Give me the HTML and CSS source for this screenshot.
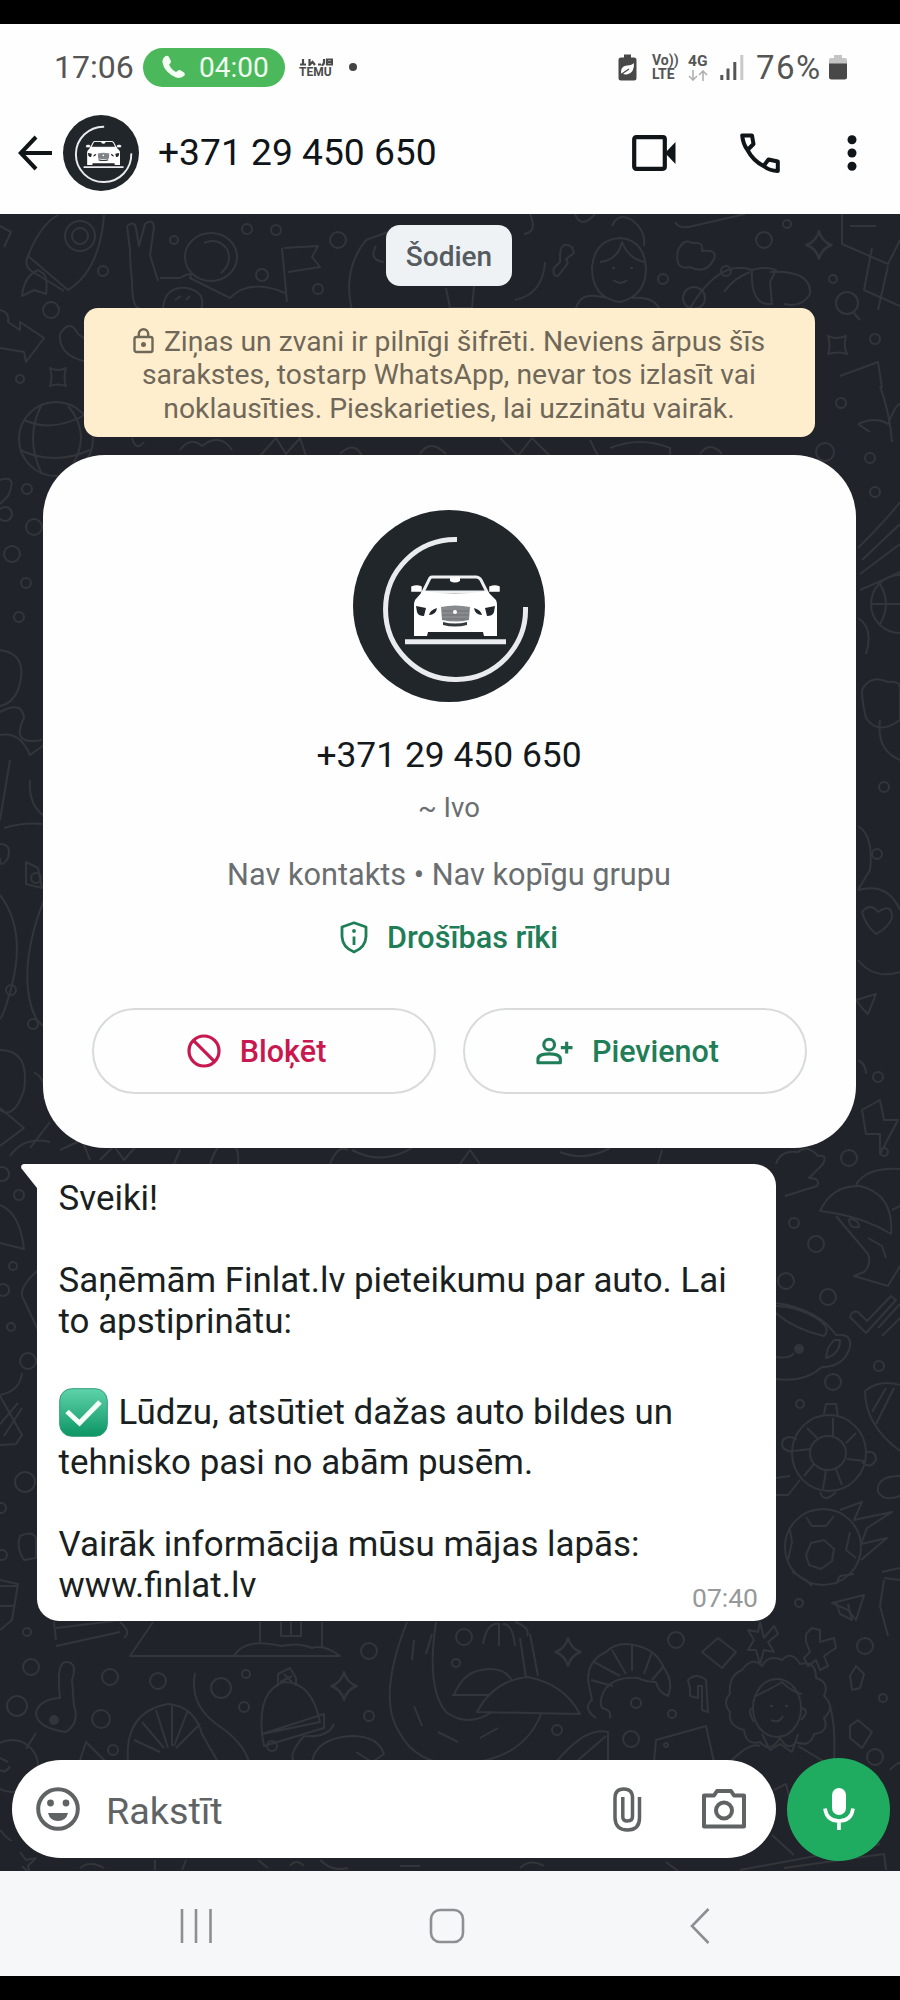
FILE: index.html
```html
<!DOCTYPE html>
<html lang="lv">
<head>
<meta charset="utf-8">
<title>+371 29 450 650</title>
<link rel="stylesheet" href="styles.css">
</head>
<body>
<svg class="defs" width="0" height="0" aria-hidden="true">
  <defs>
    <symbol id="avatar" viewBox="0 0 192 192">
      <circle cx="96" cy="96" r="96" fill="#20262a"/>
      <path d="M104 29.5A70 70 0 1 0 172.5 97" fill="none" stroke="#e9ebee" stroke-width="5"/>
      <path d="M79 67H123Q126 67 128 70L134 82H70L76 70Q77 67 79 67Z" fill="#20262a" stroke="#eef0f2" stroke-width="3"/>
      <path d="M97 67h10v4q-5 3-10 0Z" fill="#fff"/>
      <path d="M59 77q5-2 9 0v4h-9ZM137 77q5-2 9 0v4h-9Z" fill="#fff" stroke="#fff" stroke-width="1.5"/>
      <path d="M70 81Q102 86 134 81L143 90Q144 92 144 96V126H131L130 122H75L74 126H61V96Q61 92 62 90Z" fill="#fff"/>
      <path d="M63 96l10 2-2 8q-6 0-7-4ZM76 105q1-5 8-7-1 7-8 7ZM142 96l-10 2 2 8q6 0 7-4ZM129 105q-1-5-8-7 1 7 8 7Z" fill="#20262a"/>
      <path d="M88 97q14-3 29 0l-1 13q-13 3-27 0Z" fill="#888b8e"/>
      <path d="M89 101h27M89 105h27M89 109h26" stroke="#6d7175" stroke-width="1.2"/>
      <circle cx="102" cy="102" r="2" fill="#fff"/>
      <path d="M90 112q12 3 24 0v3q-12 3-24 0Z" fill="#34393c"/>
      <path d="M52 131.7H153" stroke="#e9ebee" stroke-width="5"/>
    </symbol>
    <symbol id="spark" viewBox="-12 -12 24 24"><path d="M0-11Q2-3 10 0 2 3 0 11-2 3-10 0-2-3 0-11Z"/></symbol>
  </defs>
</svg>

<header class="top">
  <div class="status">
    <span class="clock">17:06</span>
    <span class="call">
      <svg width="26" height="26" viewBox="0 0 26 26"><path d="M4 2.500Q1 5 1.500 8.500Q3 18 15 23.500Q20 25 23.500 21.500Q24.500 20 23 18.500L19 16Q17.500 15.500 16.500 17L15 18Q10 15.500 8.200 10.500L9.500 9Q10.500 8 9.500 6L7.500 2.300Q6 1 4 2.500Z" fill="#f4fff4"/></svg>
      <span class="dur">04:00</span>
    </span>
    <span class="temu">
      <svg width="34" height="8" viewBox="0 0 34 8" fill="none" stroke="#4a4a4a" stroke-width="2.200"><path d="M1 6.500h6M4 1v5M10.500 1v6l3-3 2.500 3M19 6.500h3M25 1v3q0 3-2.500 3M28 6.500V1.500h5v5ZM28 4h5"/></svg>
      <span>TEMU</span>
    </span>
    <i class="dot"></i>
    <span class="sys">
      <svg class="eco" width="19" height="27" viewBox="0 0 19 27"><path d="M6 0.500h7v3h3q2.500 0 2.500 2.500v18q0 2.500-2.500 2.500H3Q.5 26.500.5 24V6Q.5 3.500 3 3.500h3Z" fill="#484848"/><path d="M3 20Q2 12 9 11.500 14 11 16 9q.5 10-7 11.500-3 .5-4.500-1.500Z" fill="#fff"/><path d="M3 20.500 11 15" stroke="#484848" stroke-width="1.300"/></svg>
      <span class="volte"><b>Vo))</b><b>LTE</b></span>
      <span class="net"><b>4G</b><svg width="20" height="11" viewBox="0 0 20 11" fill="none" stroke="#b0b0b0" stroke-width="1.600"><path d="M5 0v10M1 6l4 4 4-4M15 11V1M11 5l4-4 4 4"/></svg></span>
      <svg class="sig" width="24" height="25" viewBox="0 0 24 25"><path d="M1.800 20v5M8 13.500V25M14.800 7V25" stroke="#555" stroke-width="3"/><path d="M21.800 0V25" stroke="#c9c9c9" stroke-width="3"/></svg>
      <span class="pct">76%</span>
      <svg class="bat" width="18" height="26" viewBox="0 0 18 26"><path d="M5 1h8v3h3q2 0 2 2v4H0V6q0-2 2-2h3Z" fill="#c4c4c4"/><path d="M0 9.500h18V23q0 2.500-2.500 2.500h-13Q0 25.500 0 23Z" fill="#484848"/></svg>
    </span>
  </div>
  <div class="bar">
    <svg class="back" width="34" height="36" viewBox="0 0 34 36" fill="none" stroke="#101517" stroke-width="4"><path d="M34 18H3M18 2 2.800 18 18 34"/></svg>
    <svg class="ava-s" width="76" height="76"><use href="#avatar"/></svg>
    <h1 class="title">+371 29 450 650</h1>
    <svg class="video" width="44" height="36" viewBox="0 0 44 36"><rect x="2.200" y="2.200" width="30.600" height="31.600" rx="2" fill="none" stroke="#0f1518" stroke-width="4.200"/><path d="M34 17 43.500 7V29L34 19Z" fill="#0f1518"/></svg>
    <svg class="phone" width="40" height="40" viewBox="0 0 40 40" fill="none" stroke="#0f1518" stroke-width="4" stroke-linejoin="round"><path d="M2.200 2.500H12L13.500 11 7.500 17Q3 11 2.200 2.500ZM7.500 17Q13 27.500 23.500 33L28.500 26.500 37.800 28.500V38Q30 38 23.500 33"/></svg>
    <svg class="more" width="10" height="36" viewBox="0 0 10 36" fill="#0f1518"><circle cx="5" cy="4.700" r="4.500"/><circle cx="5" cy="18" r="4.500"/><circle cx="5" cy="31.300" r="4.500"/></svg>
  </div>
</header>

<main class="chat">
  <svg class="doodles" viewBox="0 214 900 1657" width="900" height="1657" fill="none" stroke="#32363b" stroke-width="2" stroke-linejoin="round" aria-hidden="true">
    <!-- top band -->
    <path d="M0 226 11 232 4 247M28 256Q40 225 58 215M28 256 68 290Q100 270 104 215M28 256q-4 8 2 14l34 21"/>
    <circle cx="80" cy="236" r="15"/><circle cx="80" cy="236" r="8"/>
    <path d="M38 270q-14 6-16 26l12-6 12 4q2-14-2-20ZM130 250l-3-24q7-6 9 2l3 18 6-22q8-6 9 3l-4 28 8 26M130 250q0 16 2 30 0 30 8 28M160 278h20M180 278q14-8 10 0l40 20q20-20 55-5"/>
    <ellipse cx="211" cy="257" rx="26" ry="24"/><path d="M204 243q14-6 23 6 6 14-6 24M163 308q2-22 24-20 20 4 14 22M175 300l6-4M186 300l4-4"/>
    <path d="M282 248l5 54M284 248l34-2-6 11 8 10-32 5M352 310q-10-40 14-70l22-8M384 262q-16-2-8-16M515 300q28-6 30-38M446 288l4 20h22l2-22M530 214q8 18-6 20M575 214q6 16 20 0M675 222q4 8 18 4l52-12"/>
    <path d="M560 256q0-16 12-9l2 6-8 6 2 4-10 13q-6 0-4-8l6-6ZM612 226q6-14 20-6 14 10 12 26M592 268q2-28 28-30 24 2 26 30 0 28-26 34-28-4-28-34ZM600 262q18-2 22-20 6 16 22 20M612 268l3 0M630 268l3 0M613 280q8 6 14 0M576 308q4-14 20-12l12 2M632 298q22-2 28 12"/>
    <path d="M678 250q6-12 14-7 12-2 10 8 16-2 12 8-8 16-24 8-16 4-12-17Z"/>
    <path d="M690 308q30-50 62-38 14-4 24 0l-6 12 2 22Q750 306 752 270M724 292q10-14 26-20M770 272q42-2 40 22-8 14-26 10"/>
    <circle cx="694" cy="298" r="11"/><path d="M842 214v30l46 20 12-24M850 226l26 0M872 248l-8 42 36 16M888 266l-10 44"/>
    <g><circle cx="247" cy="229" r="5"/><circle cx="276" cy="230" r="5"/><circle cx="338" cy="240" r="8"/><circle cx="262" cy="275" r="6"/><circle cx="103" cy="271" r="5"/><circle cx="318" cy="289" r="5"/><circle cx="174" cy="240" r="4"/><circle cx="764" cy="240" r="8"/><circle cx="787" cy="224" r="4"/><circle cx="726" cy="271" r="5"/><circle cx="663" cy="279" r="5"/><circle cx="833" cy="279" r="4"/></g>
    <use href="#spark" x="804" y="230" width="30" height="30"/>
    <circle cx="847" cy="303" r="11"/><path d="M853 312l7 8"/>
    <!-- side bands, upper -->
    <path d="M0 310q10 2 8 12l12 8v-8l24 16-18 24-2-10-24-4M60 334q10-16 18 0 18 10 10 28-30-6-28-28Z"/>
    <path d="M50 368q8 4 16 0-3 10 0 18-8-3-16 0 3-8 0-18ZM828 336q8 4 18 0-3 10 1 18-9-3-19 0 3-8 0-18Z"/>
    <circle cx="56" cy="439" r="37"/><path d="M42 404q-18 34 0 70M68 406q26 30 0 66M24 420q30 14 66-8M20 450q34 16 70 0"/>
    <path d="M840 376l38-14 4 26M880 386q10 28 12 56M858 424q18-8 30 0 8-20 12-20M858 424l12 8"/>
    <g><circle cx="51" cy="310" r="8"/><circle cx="20" cy="379" r="4"/><circle cx="875" cy="339" r="5"/><circle cx="841" cy="403" r="5"/><circle cx="825" cy="452" r="9"/><circle cx="870" cy="458" r="5"/><circle cx="27" cy="489" r="5"/><circle cx="5" cy="514" r="7"/><circle cx="34" cy="527" r="8"/><circle cx="12" cy="554" r="8"/><circle cx="26" cy="583" r="5"/><circle cx="19" cy="617" r="5"/><circle cx="875" cy="492" r="5"/><circle cx="36" cy="878" r="5"/><circle cx="11" cy="990" r="5"/><circle cx="33" cy="1024" r="5"/><circle cx="877" cy="854" r="5"/><circle cx="884" cy="787" r="5"/><circle cx="878" cy="1077" r="5"/></g>
    <path d="M132 438q4 14 12 4M180 450q10-14 22-4 18-14 30 4M260 456l16-18 10 16 14-16 6 18M340 454q14-14 22 2M420 454q10-16 26 0M500 438l18 18 14-18 18 18M590 440l8 16M610 448q30-12 60 0v8M700 454q10-14 22 0"/>
    <path d="M0 480q18-6 8 16l-8 8M0 650q30 4 18 40-6 14-18 16M0 712q22-12 24 6-14 28 18 22M0 735q20-4 30 20l14-10M10 760l-10 60M4 828q20-6 38-4M30 780q-2 24 14 36M0 844q12 0 8 14-8 12-8 0M26 862l12 6 4 20-16-4ZM0 895q26 34 12 90-8 30-12 34M44 900q-20 50-16 90 4 30 16 36M0 1050q30 0 24 40-10 30-24 20M34 1072q14 8 10 28M0 1108l24 20-24 18M30 1148l20-26"/>
    <path d="M858 548q30-30 42-46M862 560l38-36M860 574l40-30M860 590q20-8 40-18"/>
    <circle cx="900" cy="604" r="29"/><path d="M872 604h28M880 584q12 20 0 40"/><path d="M858 618q16 10 8 36M862 690q8-16 26-8 14-2 12 10v28q-22 16-34-2-4-16-4-28ZM880 720q-4 30 20 40M858 826q16 10 12 44l-12 20M862 912q8-10 16 0 14-10 14 6-4 10-16 16-10-8-14-22ZM858 890q30-8 42 20M858 960q16 20 42 12"/>
    <path d="M856 1000l20-6-8 20-6-6ZM862 1110l18-10 4 20h14l-18 34v-20h-14ZM858 1060q8 4 8 14"/>
    <!-- gap between the card and the message -->
    <path d="M10 1156q14-20 40-14M60 1150l22-10 8 20M100 1160l14-14 10 14 14-16M180 1150l-6 14M210 1164q8-24 18-20 12 0 10 20M330 1164q8-20 18-14M352 1150q30 16 60-2M460 1164l10-14 10 14M560 1152q24 10 50-4M662 1150l-4 14M776 1164q4-14 22-12 10-8 20 4 10-2 5 8l-14 14q12 0 8 8l-32 10"/>
    <circle cx="849" cy="1158" r="8"/><circle cx="884" cy="1152" r="4"/>
    <!-- left of the message -->
    <path d="M0 1205q20 8 24 44l-24-6M38 1270q-22 20-14 30l14 30M0 1395q20-4 22-22M0 1396 22 1435 16 1444 0 1445M22 1408 4 1436M18 1403 0 1424M20 1536q12-6 16 2v20l-12 2q-8-12-4-24ZM0 1580l18 4-6 36-12 10M0 1586h18M0 1606h14"/>
    <g><circle cx="2" cy="1174" r="7"/><circle cx="19" cy="1195" r="5"/><circle cx="13" cy="1266" r="4"/><circle cx="3" cy="1290" r="6"/><circle cx="11" cy="1327" r="4"/><circle cx="28" cy="1361" r="8"/><circle cx="25" cy="1482" r="10"/><circle cx="1" cy="1508" r="5"/><circle cx="2" cy="1555" r="5"/></g>
    <!-- right of the message: umbrella, cup, turtle, ball -->
    <path d="M820 1211q12-26 40-25 34 8 31 48Q862 1216 820 1211ZM856 1185q10-18 44-16M892 1210l8-4M836 1216l32 38q4 10-4 18l-10 4 34 10 12-20M868 1238l14 8 4 12M849 1219q10 0 10 8-10 2-10-8"/>
    <path d="M776 1303q42 6 60 32 16-2 14 12-6 20-28 20-18 16-46 12M776 1313q18 16 48 23 8-8-8-18-20-12-40-12M776 1357q14 2 18-4M828 1348l6-8h6q0 14-14 18ZM850 1317l14 14 2 2 30-33-5-4-24 25-9-9q-6-2-8 5ZM878 1328l22-24M882 1336l18-18"/><circle cx="799" cy="1349" r="4" fill="#32363b"/>
    <ellipse cx="829" cy="1453" rx="37" ry="38"/><ellipse cx="828" cy="1453" rx="18" ry="17"/>
    <path d="M833 1436v-18M846 1443l10-10M847 1459l18 2M836 1469l6 16M826 1470l-3 19M814 1464l-10 12M811 1449l-18 2M817 1438l-10-10M824 1414l2-10h10l2 12M793 1452q-14-2-10-12 6-6 14 0M866 1452q10-2 10 8-6 10-14 2M800 1480l-12 15h-12M820 1492q4 12 16 0M776 1478l14-2M865 1391q14-12 35-6M865 1391q0 34 35 60M894 1388l-18 36M886 1388l-14 24M900 1476q-24 0-22 16 6 10 22 4"/>
    <circle cx="823" cy="1547" r="38"/><path d="M806 1555l5-12 13-3 10 9-2 12-11 8-12-4ZM806 1517l6 9h14l8-10M850 1532l-4 18 10 8M788 1560l4-18-2-12M792 1572l14 8 6 6M836 1584l4-8 14-2M840 1510l22-8-8 18 38-8-25 16-6 16 26-6-26 22M832 1603l32-8-8 25-8-10ZM884 1580l-4 26 8 30M882 1572l18-4M884 1578l16 2"/>
    <g><circle cx="794" cy="1223" r="5"/><circle cx="816" cy="1244" r="8"/><circle cx="786" cy="1281" r="8"/><circle cx="828" cy="1297" r="8"/><circle cx="833" cy="1382" r="8"/><circle cx="879" cy="1366" r="5"/><circle cx="800" cy="1404" r="4"/><circle cx="799" cy="1603" r="4"/></g>
    <!-- below the message -->
    <path d="M54 1622l2 18M56 1628l66-8M56 1646l64-14M120 1622q12 10 4 16M153 1622l-23 34h210q-16-12-28-8-14-6-30-2-20-4-30-2-12 2-18 12M260 1622v22M322 1622v26M281 1622v14h20v-14M291 1622v14"/>
    <path d="M60 1698q-4-36 6-36 12 0 6 18l2 26q6 16-8 26-30-4-30-20 4-12 22-14ZM36 1733l-10 16"/><circle cx="54" cy="1720" r="4" fill="#32363b"/>
    <circle cx="12" cy="1766" r="26"/><path d="M0 1758l8 4M10 1766q-4 8-10 4"/>
    <path d="M195 1673q-6 30 20 50 30 20 34 40M128 1762q-4-50 40-58 26 2 34 30l16 28M134 1740l26 12M142 1722l22 26M156 1710l12 38M172 1706l0 40M188 1710l-14 36M200 1724l-24 24M80 1760l6-18 20 20"/>
    <path d="M262 1734q-4-44 22-52 28 0 36 40ZM262 1734l62-20v14l-60 18ZM278 1684l0-10 12-6 6 10 0 8M284 1674l8 8M280 1682l12-6M334 1724q-6 14-30 12-16 18-10 26M312 1762q4-24 40-26 26 0 32 18l-12 8-16-10"/>
    <path d="M407 1622q-30 76-8 110 24 44 88 28 40-10 54-46M436 1622q-10 66 10 90 22 16 46 0M414 1640l-2 20M414 1706l8 20M438 1732l20 10M480 1738l18-10M426 1654l6-20"/>
    <path d="M483 1644q4-22 16-20v22M503 1624q10 0 12 22M515 1622q16 6 12 14M520 1638l6 40M530 1634l8 42M452 1695h38M454 1695q10-26 36-26 16 0 22 12M477 1712Q494 1680 528 1677 564 1684 580 1714Z"/>
    <path d="M596 1718q-14-10-4-18l-4-20q0-20 18-28 12-12 32-6 18 4 26 22 10 14 4 28-10-4-12-14-10 0-18-4-22-2-32 10-8 12-4 20 10 2 8 10M591 1680l22 6M594 1662l26 14M612 1650l14 24M632 1645v26M652 1652l-8 22M664 1666l-12 14"/>
    <path d="M556 1762q30-36 52-30v30M576 1762l30-26M654 1762l2-22 50-14 8 36M702 1652l16-14 18 14-14 16ZM850 1676l6-10 8 8-4 14-8 2ZM850 1726l8-6 14 12-10 16-12-10ZM690 1688l-2-8q8-8 18 0l2 32-6-2v-24h-4v12l-8-2Z"/>
    <path d="M760 1622l4 16 10-12 4 8-10 8 6 10-10-2-4 14-4-14-8 0 6-10-6-10 10 2ZM806 1634l6-6 8 2 0 12 14-4 2 10-12 8 4 10-8 4-4-10-8 6-4-8 6-6-4-10ZM836 1602l4 12 12 6-4-16"/>
    <path d="M742 1670q10-14 20-4 6-12 20-6 10-10 18 4 16-4 16 14 14 4 8 18 12 12 0 22 6 14-10 16-4 14-18 8-8 10-16-4-10 16-20 4-14 4-16-12-16-4-14-18-8-10 0-18-2-18 12-24Z"/><ellipse cx="777" cy="1708" rx="24" ry="29"/><path d="M756 1696q20-10 26-14 10 10 20 12M770 1706l3 0M785 1706l3 0M771 1720q8 4 12-4M754 1708q-8 0 0 14M801 1708q10 2 0 12M762 1734l8 16 10-6 12 8 6-18M730 1762q20-20 30-16M798 1746l30 18M828 1700q8 20 6 62"/>
    <g><circle cx="27" cy="1632" r="4"/><circle cx="31" cy="1667" r="8"/><circle cx="17" cy="1706" r="10"/><circle cx="101" cy="1719" r="9"/><circle cx="110" cy="1677" r="8"/><circle cx="158" cy="1681" r="8"/><circle cx="221" cy="1688" r="10"/><circle cx="246" cy="1674" r="4"/><circle cx="244" cy="1707" r="5"/><circle cx="369" cy="1651" r="8"/><circle cx="369" cy="1716" r="5"/><circle cx="272" cy="1746" r="5"/><circle cx="464" cy="1637" r="8"/><circle cx="456" cy="1663" r="4"/><circle cx="676" cy="1640" r="8"/><circle cx="672" cy="1714" r="4"/><circle cx="636" cy="1703" r="5"/><circle cx="631" cy="1739" r="8"/><circle cx="557" cy="1730" r="5"/><circle cx="865" cy="1646" r="8"/><circle cx="883" cy="1698" r="4"/><circle cx="875" cy="1757" r="8"/><circle cx="666" cy="1745" r="2"/><circle cx="113" cy="1750" r="5"/></g>
    <use href="#spark" x="329" y="1671" width="30" height="30"/><use href="#spark" x="553" y="1637" width="30" height="30"/>
    <!-- around the composer -->
    <path d="M0 1830q10 12 12 10M20 1852l6 8 10-2-8 8 2 8-8-8M80 1868q10-8 24 0M155 1860v10M186 1860l-4 10M258 1860l10 8M290 1866q6-8 14 0M320 1860q12 12 28 8M400 1866h20M520 1868q10-10 24-2M666 1862l12 9M772 1835l22 20M740 1870l140-26M784 1868l100-14 2 16M890 1770q10-10 10-6M774 1790l12-6 4 16"/>
  </svg>

  <div class="date">Šodien</div>

  <div class="notice">
    <div><svg width="21" height="26" viewBox="0 0 21 26" fill="none" stroke="#6f685a" stroke-width="2.400"><rect x="1.500" y="9" width="18" height="15" rx="2"/><path d="M5.800 9V6a4.700 4.700 0 0 1 9.400 0V9"/><circle cx="10.500" cy="16.500" r="1.300" fill="#6f685a"/></svg><span>Ziņas un zvani ir pilnīgi šifrēti. Neviens ārpus šīs</span></div>
    <div><span>sarakstes, tostarp WhatsApp, nevar tos izlasīt vai</span></div>
    <div><span>noklausīties. Pieskarieties, lai uzzinātu vairāk.</span></div>
  </div>

  <section class="card">
    <svg class="ava-l" width="192" height="192"><use href="#avatar"/></svg>
    <h2 class="num">+371 29 450 650</h2>
    <p class="ivo">~ Ivo</p>
    <p class="info">Nav kontakts • Nav kopīgu grupu</p>
    <div class="tools">
      <svg width="28" height="33" viewBox="0 0 28 33" fill="none" stroke="#1f7d57" stroke-width="2.800"><path d="M14 1.800 26 6V15.500Q25.500 26.500 14 31Q2.500 26.500 2 15.500V6Z" stroke-linejoin="round"/><path d="M14 15.500V24"/><circle cx="14" cy="10" r="1" stroke-width="1.800"/></svg>
      <span>Drošības rīki</span>
    </div>
    <div class="actions">
      <button class="btn block"><svg width="34" height="34" viewBox="0 0 34 34" fill="none" stroke="#c8184f" stroke-width="3.200"><circle cx="17" cy="17" r="15"/><path d="M6.400 6.400 27.600 27.600"/></svg><span>Bloķēt</span></button>
      <button class="btn add"><svg width="37" height="28" viewBox="0 0 38 28" fill="none" stroke="#1f7d57" stroke-width="3.200"><circle cx="13.500" cy="7.500" r="5.500"/><path d="M2 26v-3.500Q2 17 13.500 17T25 22.500V26Z" stroke-linejoin="round"/><path d="M31.500 4.500v12M25.500 10.500h12"/></svg><span>Pievienot</span></button>
    </div>
  </section>

  <article class="msg">
    <svg class="tail" width="20" height="24" viewBox="0 0 20 24"><path d="M20 0H4Q0 .5 1.500 4.500L17 24H20Z" fill="#fff"/></svg>
    <div class="ln">Sveiki!</div>
    <div class="ln gap"><span>Saņēmām Finlat.lv pieteikumu par auto. Lai</span></div>
    <div class="ln">to apstiprinātu:</div>
    <div class="ln tall gap"><svg width="49" height="49" viewBox="0 0 49 49"><defs><linearGradient id="g" x2="0" y2="1"><stop offset="0" stop-color="#5fd3ab"/><stop offset="1" stop-color="#0c9564"/></linearGradient></defs><rect x=".7" y=".7" width="47.600" height="47.600" rx="12" fill="url(#g)" stroke="#2e9d77" stroke-width="1"/><path d="M8 23.500 20.500 35 41 14" fill="none" stroke="#f4fffa" stroke-width="5"/></svg><span>Lūdzu, atsūtiet dažas auto bildes un</span></div>
    <div class="ln">tehnisko pasi no abām pusēm.</div>
    <div class="ln gap">Vairāk informācija mūsu mājas lapās:</div>
    <div class="ln">www.finlat.lv</div>
    <time class="time">07:40</time>
  </article>

  <footer class="composer">
    <div class="field">
      <svg class="smile" width="44" height="44" viewBox="0 0 44 44"><circle cx="22" cy="22" r="19.800" fill="none" stroke="#5f6364" stroke-width="4"/><circle cx="14.500" cy="16" r="3.400" fill="#5f6364"/><circle cx="30" cy="16" r="3.400" fill="#5f6364"/><path d="M12 26H32Q30 34 22 34T12 26Z" fill="#5f6364"/></svg>
      <span class="ph">Rakstīt</span>
      <svg class="clip" width="29" height="45" viewBox="0 0 29 45" fill="none" stroke="#5f6364" stroke-width="3.500"><path d="M26.500 10V31Q26.500 43 14.500 43T2 31V11Q2 2 10.800 2T19.500 11V29.500Q19.500 34 14.500 34T9.800 29.500V10"/></svg>
      <svg class="cam" width="44" height="40" viewBox="0 0 44 40" fill="none" stroke="#5f6364" stroke-width="4" stroke-linejoin="round"><path d="M2 6.500H12L15 2H29L32 6.500H42V37.500H2Z"/><circle cx="22" cy="21.500" r="8"/></svg>
    </div>
    <button class="mic" aria-label="Mic"><svg width="32" height="44" viewBox="0 0 32 44"><rect x="9" y="1" width="14" height="27" rx="7" fill="#fff"/><path d="M2 21.500Q3.500 34 16 34T30 21.500M16 34v9" fill="none" stroke="#fff" stroke-width="3.600"/></svg></button>
  </footer>
</main>

<nav class="nav">
  <svg width="32" height="36" viewBox="0 0 32 36" stroke="#8e8f92" stroke-width="2.600"><path d="M2 1v34M16 1v34M30.500 1v34"/></svg>
  <svg class="home" width="36" height="36" viewBox="0 0 36 36" fill="none" stroke="#8e8f92" stroke-width="2.600"><rect x="2" y="2" width="32" height="32" rx="9"/></svg>
  <svg width="20" height="36" viewBox="0 0 20 36" fill="none" stroke="#8e8f92" stroke-width="2.600"><path d="M18.500 1 2 18 18.500 35"/></svg>
</nav>
</body>
</html>
```
FILE: styles.css
```css
* { box-sizing: border-box; margin: 0; padding: 0; }
body {
  width: 900px; height: 2000px; background: #000; padding: 24px 0;
  font-family: Roboto, "Noto Sans", sans-serif; color: #14191c;
  display: flex; flex-direction: column; overflow: hidden;
}
svg { display: block; flex: none; }
.defs { position: absolute; }
h1, h2 { font-weight: 400; }
h1, span, .ln { white-space: nowrap; }

.top { height: 190px; background: #fefefe; }
.status { height: 86px; display: flex; align-items: center; padding: 0 53px; color: #555; }
.clock { font-size: 32px; width: 90px; padding-left: 1px; }
.call {
  display: flex; align-items: center; width: 142px; height: 39px; border-radius: 20px;
  background: #4cb85c; padding-left: 18px; gap: 12px; color: #f0fdf0;
}
.dur { font-size: 28px; }
.temu { margin-left: 14px; width: 36px; font-size: 12px; line-height: 10px; font-weight: 700; color: #4a4a4a; display: grid; gap: 1px; }
.dot { width: 8px; height: 8px; border-radius: 50%; background: #444; margin-left: 14px; }
.sys { display: flex; align-items: center; margin-left: auto; }
.volte { display: grid; margin-left: 15px; width: 26px; font-size: 14px; line-height: 14px; }
.net { display: grid; margin-left: 10px; width: 21px; font-size: 15.500px; line-height: 14px; gap: 2px; }
.volte b, .net b { font-weight: 700; }
.sig { margin-left: 11px; }
.pct { font-size: 33px; letter-spacing: 1.500px; margin-left: 12px; width: 73px; }

.bar { height: 86px; display: flex; align-items: center; padding-left: 18px; color: #0f1518; }
.ava-s { margin-left: 11px; }
.title { font-size: 37.200px; margin-left: 19px; width: 474px; padding-bottom: 2px; }
.phone { margin-left: 64px; }
.more { margin-left: 67px; }

.chat { position: relative; height: 1657px; background: #20242a; display: flex; flex-direction: column; align-items: center; padding-right: 2px; }
.doodles { position: absolute; left: 0; top: 0; }
.chat > :not(.doodles) { position: relative; }
.date {
  margin-top: 11px; width: 126px; height: 61px; border-radius: 14px; background: #eef2f4;
  font-size: 28px; font-weight: 500; color: #565b60; text-align: center; line-height: 64px;
}
.notice {
  margin-top: 22px; width: 731px; height: 129px; border-radius: 14px; background: #ffeecd;
  padding-top: 17px; color: #6f685a; font-size: 28.300px; line-height: 33.400px;
}
.notice div { display: flex; justify-content: center; gap: 10px; }
.notice svg { margin-top: 3px; }
.card {
  margin-top: 18px; width: 813px; height: 693px; border-radius: 62px; background: #fefefe;
  display: flex; flex-direction: column; align-items: center; padding-top: 55px;
}
.num { font-size: 35.400px; line-height: 40px; margin-top: 33px; }
.ivo { font-size: 27.500px; line-height: 32px; margin-top: 17px; color: #6a6e70; }
.info { font-size: 30.700px; line-height: 36px; margin-top: 33px; color: #6a6e70; }
.tools { display: flex; align-items: center; gap: 19px; height: 36px; margin-top: 26px; font-size: 30.600px; font-weight: 500; color: #1f7d57; }
.actions { display: flex; gap: 27px; margin-top: 53px; }
.btn {
  width: 344px; height: 86px; border: 2px solid #d9dadb; border-radius: 43px; background: #fefefe;
  font: 500 30.500px Roboto, sans-serif; display: flex; align-items: center; justify-content: center; gap: 19px;
  padding-right: 14px;
}
.block { color: #c8184f; }
.add { color: #1f7d57; }

.msg {
  align-self: flex-start; margin: 16px 0 0 37px; width: 739px; height: 457px; background: #fff;
  border-radius: 0 22px 22px 22px; padding: 13.500px 21.500px 0; color: #1a1f22;
}
.tail { position: absolute; left: -17px; top: 0; }
.ln { display: flex; align-items: center; height: 41px; font-size: 34.900px; line-height: 41px; }
.gap { margin-top: 41px; }
.tall { height: 59px; gap: 11px; }
.time { position: absolute; right: 18px; bottom: 8px; font-size: 26.500px; line-height: 30px; color: #969899; }

.composer { margin-top: auto; margin-bottom: 10px; align-self: stretch; height: 104px; padding: 0 7px 0 12px; display: flex; align-items: center; gap: 11px; }
.field { width: 764px; height: 98px; border-radius: 49px; background: #fff; display: flex; align-items: center; padding: 0 30px 0 24px; }
.ph { font-size: 37.800px; color: #5f6364; margin-left: 26px; padding-top: 3px; flex: 1; }
.cam { margin-left: 60px; }
.mic { width: 103px; height: 103px; border: 0; border-radius: 50%; background: #1fab60; display: grid; place-items: center; }

.nav { height: 105px; background: #f6f7f9; display: flex; align-items: center; padding: 4px 0 0 180px; }
.home { margin-left: 217px; margin-right: 225px; }
```
